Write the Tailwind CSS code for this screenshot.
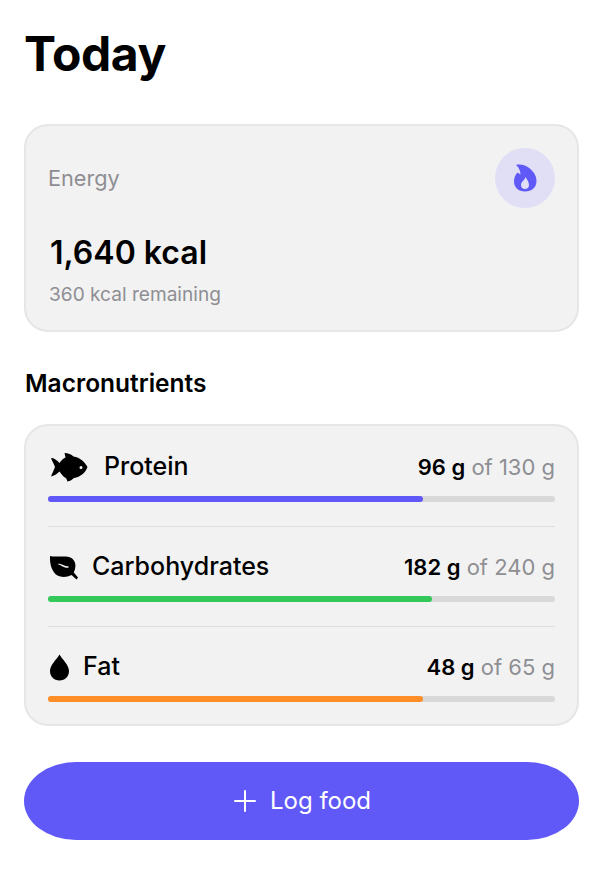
<!DOCTYPE html>
<html lang="en">
<head>
<meta charset="utf-8">
<title>Today</title>
<script src="https://cdn.jsdelivr.net/npm/@tailwindcss/browser@4"></script>
</head>
<body class="bg-white font-['Inter',sans-serif] text-black">
  <main class="w-[603px] h-[882px] px-6 pt-[25px] overflow-hidden">
    <h1 class="text-[48px] leading-[58px] font-bold tracking-[-0.4px]">Today</h1>

    <!-- energy -->
    <section class="mt-[41px] h-[208px] rounded-[24px] border-2 border-[#e6e6e6] bg-[#f2f2f2] px-[22px] pt-[22px]">
      <div class="flex items-center justify-between">
        <span class="text-[21.700px] text-[#8e8e93]">Energy</span>
        <span class="w-[60px] h-[60px] rounded-full bg-[#e0dff5] flex items-center justify-center">
          <svg class="w-[24px] h-[28px]" viewBox="0 0 24 28">
            <path fill="#6159f7" fill-rule="evenodd" d="M3 1C7 0 12 1 15.500 3.500C20 7 23.500 11 23.500 17C23.500 23.500 18.500 27.500 12 27.500C5.500 27.500 1 23.500 1 17.500C1 14 2 11 4.500 8.500L7.500 10.500C7.500 7 6 3.500 3 1ZM12.500 13C12 16 8 17.500 8 21C8 23.500 9.800 25 12 25C14.200 25 16 23.500 16 21C16 18 14 15.500 12.500 13Z"/>
          </svg>
        </span>
      </div>
      <p class="mt-[25px] pl-[2px] text-[32px] leading-[40px] font-semibold">1,640 kcal</p>
      <p class="mt-[9px] pl-px text-[19.100px] leading-[24px] text-[#8e8e93]">360 kcal remaining</p>
    </section>

    <h2 class="mt-[34px] pl-px text-[24.500px] leading-[34px] font-semibold">Macronutrients</h2>

    <!-- macros -->
    <section class="mt-[24px] h-[302px] rounded-[24px] border-2 border-[#e6e6e6] bg-[#f2f2f2] px-[22px] pt-[23px]">
      <div class="h-[77px]">
        <div class="h-[36px] flex items-center justify-between">
          <div class="flex items-center gap-[16px] ml-px">
            <svg class="w-[39px] h-[30px]" viewBox="0 0 39 30">
              <path fill-rule="evenodd" d="M2 6C5 6 8 8 10.500 11C12.500 8 14.500 6.500 16.500 5.500L15.500 1C19 1 22.500 2.500 24.500 4.500C31 5.500 36 10 38.500 15C36.500 20.500 31.500 25 25 26C23.500 27.500 21 29 18.500 29.500L17 26C14 25 12.500 22 10.500 19.500C8 22 5 24 2 24.500C3 21.500 5 18 6 15C5 12 3 9 2 6ZM32 14A1.500 1.500 0 1 0 32 17A1.500 1.500 0 1 0 32 14Z"/>
            </svg>
            <span class="text-[25px] font-medium">Protein</span>
          </div>
          <span class="text-[22px]"><b class="font-semibold">96 g</b> <span class="text-[#8e8e93]">of 130 g</span></span>
        </div>
        <div class="mt-[11px] h-[6px] rounded-full bg-[#d9d9d9]"><div class="h-full w-[74%] rounded-full bg-[#6159f7]"></div></div>
      </div>
      <div class="border-t border-[#dedede]"></div>

      <div class="h-[99px] pt-[22px]">
        <div class="h-[36px] flex items-center justify-between">
          <div class="flex items-center gap-[13px] ml-px">
            <svg class="w-[30px] h-[25px]" viewBox="0 0 30 25">
              <path fill-rule="evenodd" d="M1 1C6 2.500 14 0.500 20 2C25.500 3.500 27.500 9 26 14C25.700 15.200 25.300 16.500 24.800 17.500L29 22.500L27.500 24.500L22.500 20C18 22.500 12 22.500 8.500 20.500C3 17.500 0.500 9 1 1ZM8.500 9C12 7.500 15 11.500 19.500 11.200L19.500 12.700C15 13.500 12 10 8.500 9Z"/>
            </svg>
            <span class="text-[25px] font-medium">Carbohydrates</span>
          </div>
          <span class="text-[22px]"><b class="font-semibold">182 g</b> <span class="text-[#8e8e93]">of 240 g</span></span>
        </div>
        <div class="mt-[11px] h-[6px] rounded-full bg-[#d9d9d9]"><div class="h-full w-[75.800%] rounded-full bg-[#34c759]"></div></div>
      </div>
      <div class="border-t border-[#dedede]"></div>

      <div class="pt-[22px]">
        <div class="h-[36px] flex items-center justify-between">
          <div class="flex items-center gap-[13px] ml-px">
            <svg class="w-[21px] h-[27px]" viewBox="0 0 21 27">
              <path d="M10.500 0.500C13 5 20 11 20 17C20 22.500 16 26.500 10.500 26.500C5 26.500 1 22.500 1 17C1 11 8 5 10.500 0.500Z"/>
            </svg>
            <span class="text-[25px] font-medium">Fat</span>
          </div>
          <span class="text-[22px]"><b class="font-semibold">48 g</b> <span class="text-[#8e8e93]">of 65 g</span></span>
        </div>
        <div class="mt-[11px] h-[6px] rounded-full bg-[#d9d9d9]"><div class="h-full w-[74%] rounded-full bg-[#ff8d28]"></div></div>
      </div>
    </section>

    <button class="mt-[36px] w-full h-[78px] rounded-[52px/39px] bg-[#6159f7] text-white flex items-center justify-center gap-[14px] pl-[2px] text-[24px]">
      <svg class="w-[22px] h-[22px]" viewBox="0 0 22 22" fill="none" stroke="white" stroke-width="2" stroke-linecap="round"><path d="M11 1V21M1 11H21"/></svg>
      <span>Log food</span>
    </button>
  </main>
</body>
</html>
